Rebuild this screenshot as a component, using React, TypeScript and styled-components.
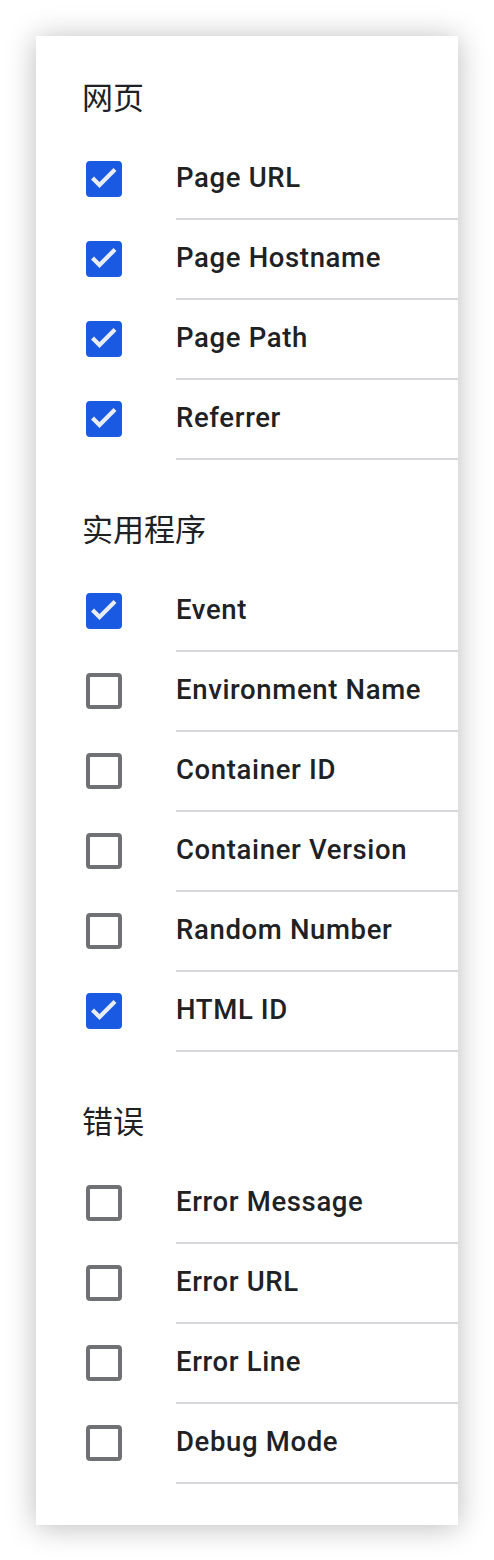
import React from "react";
import styled, { createGlobalStyle } from "styled-components";

const Global = createGlobalStyle`
  html, body { margin: 0; padding: 0; background: #ffffff; }
  body { font-family: Roboto, "Noto Sans", "Noto Sans CJK SC", sans-serif; color: #202124; }
`;

const Page = styled.div`
  padding: 36px;
`;

const Card = styled.div`
  width: 422px;
  background: #ffffff;
  box-shadow: 0 2px 28px rgba(0, 0, 0, 0.27);
  padding-bottom: 41px;
`;

const Section = styled.section<{ $first?: boolean }>`
  padding-top: ${(p) => (p.$first ? 42 : 50)}px;
`;

const Heading = styled.h2`
  margin: 0 0 22px 0;
  padding-left: 46px;
  height: 40px;
  line-height: 36px;
  font-family: "Noto Sans CJK SC", "Noto Sans", sans-serif;
  font-size: 31px;
  font-weight: 400;
  color: #202124;
`;

const Row = styled.label`
  display: flex;
  align-items: stretch;
  height: 80px;
  cursor: pointer;
`;

const BoxCell = styled.div`
  width: 140px;
  padding-left: 50px;
  box-sizing: border-box;
  display: flex;
  align-items: center;
  padding-bottom: 2px;
`;

const Box = styled.span<{ $checked: boolean }>`
  width: 36px;
  height: 36px;
  box-sizing: border-box;
  border-radius: 4px;
  display: flex;
  align-items: center;
  justify-content: center;
  background: ${(p) => (p.$checked ? "#1a5ae3" : "#ffffff")};
  border: ${(p) => (p.$checked ? "none" : "4px solid #6f7175")};
`;

const Label = styled.div`
  flex: 1;
  display: flex;
  align-items: center;
  padding-bottom: 4px;
  border-bottom: 2px solid #d6d7db;
  font-family: Roboto, "Noto Sans", sans-serif;
  font-size: 27.5px;
  font-weight: 500;
  letter-spacing: 0.65px;
  color: #202124;
`;

const Check = () => (
  <svg width="36" height="36" viewBox="0 0 36 36">
    <polyline
      points="8,18.5 13.5,24 27.5,10"
      fill="none"
      stroke="#e8edf7"
      strokeWidth="4.2"
      strokeLinecap="square"
    />
  </svg>
);

type Item = { name: string; checked: boolean };

const sections: { title: string; items: Item[] }[] = [
  {
    title: "网页",
    items: [
      { name: "Page URL", checked: true },
      { name: "Page Hostname", checked: true },
      { name: "Page Path", checked: true },
      { name: "Referrer", checked: true },
    ],
  },
  {
    title: "实用程序",
    items: [
      { name: "Event", checked: true },
      { name: "Environment Name", checked: false },
      { name: "Container ID", checked: false },
      { name: "Container Version", checked: false },
      { name: "Random Number", checked: false },
      { name: "HTML ID", checked: true },
    ],
  },
  {
    title: "错误",
    items: [
      { name: "Error Message", checked: false },
      { name: "Error URL", checked: false },
      { name: "Error Line", checked: false },
      { name: "Debug Mode", checked: false },
    ],
  },
];

export default function App() {
  return (
    <>
      <Global />
      <Page>
        <Card>
          {sections.map((s, i) => (
            <Section key={s.title} $first={i === 0}>
              <Heading>{s.title}</Heading>
              {s.items.map((it) => (
                <Row key={it.name}>
                  <BoxCell>
                    <Box $checked={it.checked}>{it.checked && <Check />}</Box>
                  </BoxCell>
                  <Label>{it.name}</Label>
                </Row>
              ))}
            </Section>
          ))}
        </Card>
      </Page>
    </>
  );
}
